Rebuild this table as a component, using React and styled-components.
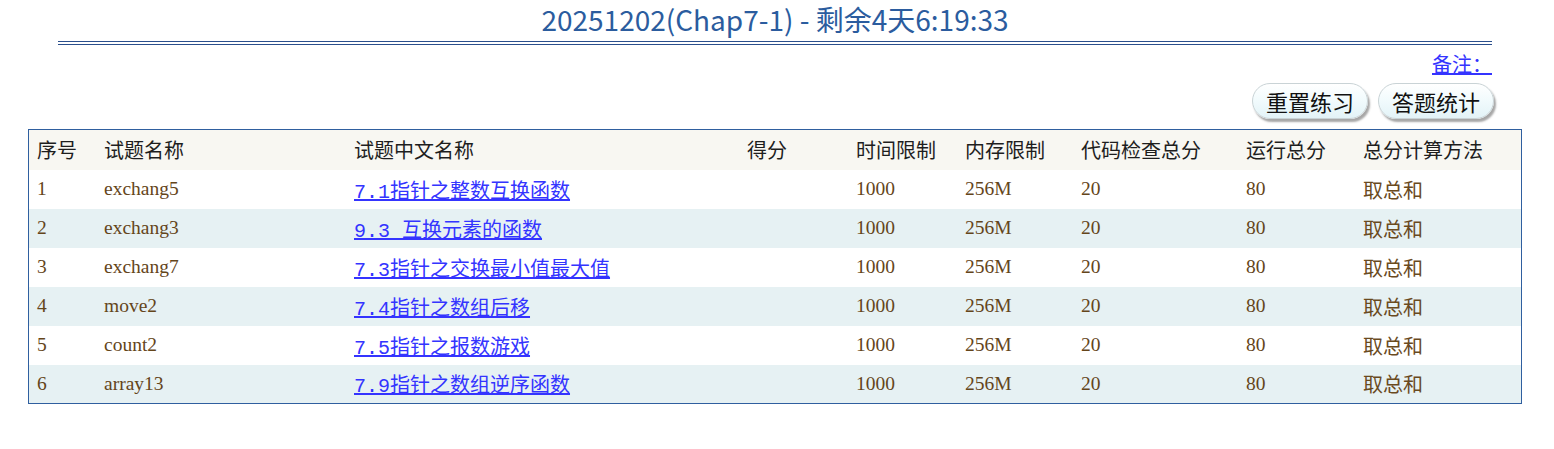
import React from "react";
import styled, { createGlobalStyle } from "styled-components";

const GlobalStyle = createGlobalStyle`
  html, body {
    margin: 0;
    padding: 0;
    background: #ffffff;
  }
`;

const Page = styled.div`
  width: 1554px;
  padding-top: 2px;
  font-family: "Liberation Serif", "Noto Sans CJK SC", serif;
`;

const Title = styled.h1`
  margin: 0 62px 0 58px;
  padding-bottom: 5px;
  text-align: center;
  font-family: "Noto Sans CJK SC", "Open Sans", sans-serif;
  font-weight: 400;
  font-size: 28px;
  line-height: 34px;
  color: #2b5c9e;
  border-bottom: 4px double #2b4f8c;
`;

const Toolbar = styled.div`
  margin: 0 62px 0 0;
  display: flex;
  flex-direction: column;
  align-items: flex-end;
`;

const NoteLink = styled.a`
  margin-top: 7px;
  font-size: 20px;
  line-height: 24px;
  color: #3434ff;
  text-decoration: underline;
  font-family: "Noto Sans CJK SC", serif;
`;

const ButtonRow = styled.div`
  display: flex;
  gap: 10px;
  margin-top: 7px;
  margin-right: -2px;
`;

const PillButton = styled.button`
  width: 116px;
  height: 36px;
  border-radius: 18px;
  border: 1px solid #c9d3d6;
  background: linear-gradient(180deg, #ffffff 0%, #f2fbfd 45%, #e3f3f7 100%);
  box-shadow: 2px 3px 2px rgba(60, 60, 60, 0.45);
  font-family: "Noto Sans CJK SC", sans-serif;
  font-weight: 400;
  font-size: 22px;
  color: #111;
  padding: 0;
  line-height: 34px;
`;

const Table = styled.table`
  margin: 10px 0 0 28px;
  width: 1494px;
  border-collapse: collapse;
  border: 1px solid #2f5f9f;
  font-size: 19.5px;
`;

const HeadRow = styled.tr`
  background: #f8f7f2;
  height: 40px;
`;

const Th = styled.th`
  text-align: left;
  font-weight: 400;
  color: #1e1e1e;
  padding: 0 0 0 ${(p) => p.$pad || 0}px;
  width: ${(p) => p.$w}px;
  font-family: "Noto Sans CJK SC", serif;
  font-size: 20px;
`;

const Row = styled.tr`
  height: 39px;
  background: ${(p) => (p.$alt ? "#e6f1f3" : "#ffffff")};
`;

const Td = styled.td`
  color: #64451a;
  padding: 0 0 0 ${(p) => p.$pad || 0}px;
  vertical-align: middle;
`;

const Cjk = styled.span`
  font-family: "Noto Sans CJK SC", serif;
  font-size: 20px;
  color: #6a4a1e;
`;

const ProblemLink = styled.a`
  color: #3434ff;
  text-decoration: underline;
  font-family: "Liberation Mono", "Noto Sans CJK SC", serif;
  font-size: 20px;
`;

const rows = [
  { id: 1, name: "exchang5", title: "7.1指针之整数互换函数" },
  { id: 2, name: "exchang3", title: "9.3 互换元素的函数" },
  { id: 3, name: "exchang7", title: "7.3指针之交换最小值最大值" },
  { id: 4, name: "move2", title: "7.4指针之数组后移" },
  { id: 5, name: "count2", title: "7.5指针之报数游戏" },
  { id: 6, name: "array13", title: "7.9指针之数组逆序函数" },
];

const columns = [
  { label: "序号", w: 67, pad: 8 },
  { label: "试题名称", w: 250 },
  { label: "试题中文名称", w: 393 },
  { label: "得分", w: 109 },
  { label: "时间限制", w: 109 },
  { label: "内存限制", w: 116 },
  { label: "代码检查总分", w: 165 },
  { label: "运行总分", w: 117 },
  { label: "总分计算方法" },
];

export default function App() {
  return (
    <Page>
      <GlobalStyle />
      <Title>20251202(Chap7-1) - 剩余4天6:19:33</Title>
      <Toolbar>
        <NoteLink href="#">备注：</NoteLink>
        <ButtonRow>
          <PillButton>重置练习</PillButton>
          <PillButton>答题统计</PillButton>
        </ButtonRow>
      </Toolbar>
      <Table>
        <thead>
          <HeadRow>
            {columns.map((c) => (
              <Th key={c.label} $w={c.w} $pad={c.pad}>
                {c.label}
              </Th>
            ))}
          </HeadRow>
        </thead>
        <tbody>
          {rows.map((r, i) => (
            <Row key={r.id} $alt={i % 2 === 1}>
              <Td $pad={8}>{r.id}</Td>
              <Td>{r.name}</Td>
              <Td>
                <ProblemLink href="#">{r.title}</ProblemLink>
              </Td>
              <Td></Td>
              <Td>1000</Td>
              <Td>256M</Td>
              <Td>20</Td>
              <Td>80</Td>
              <Td>
                <Cjk>取总和</Cjk>
              </Td>
            </Row>
          ))}
        </tbody>
      </Table>
    </Page>
  );
}
